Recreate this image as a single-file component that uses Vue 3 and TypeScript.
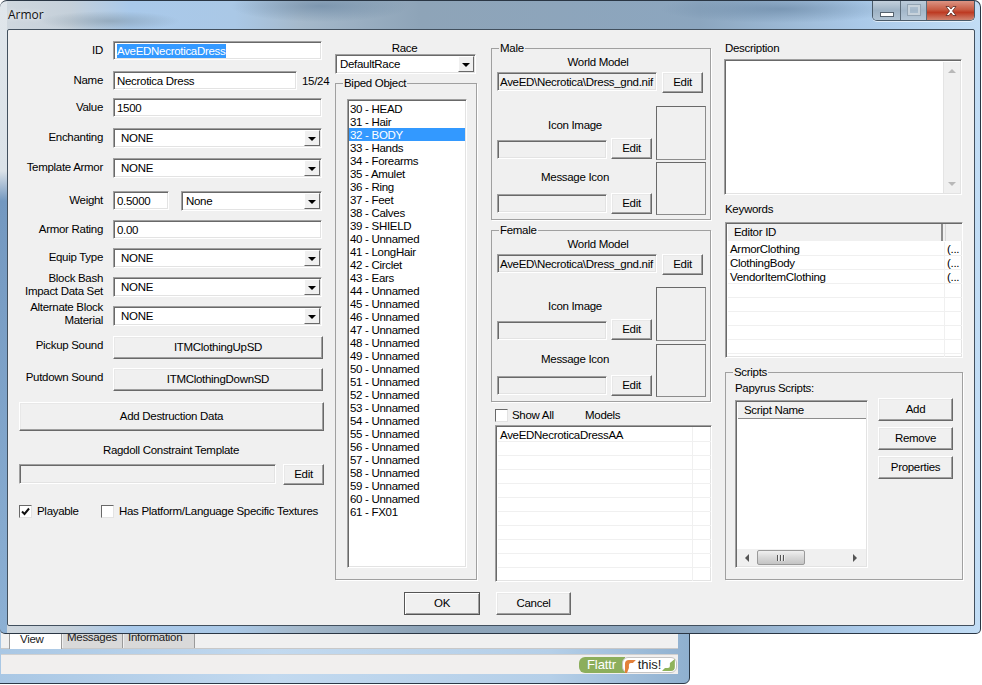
<script setup lang="ts">
const bodyParts: Record<number, string> = {
  30: 'HEAD', 31: 'Hair', 32: 'BODY', 33: 'Hands', 34: 'Forearms', 35: 'Amulet', 36: 'Ring',
  37: 'Feet', 38: 'Calves', 39: 'SHIELD', 41: 'LongHair', 42: 'Circlet', 43: 'Ears', 61: 'FX01',
};
const biped = Array.from({ length: 32 }, (_, i) => `${30 + i} - ${bodyParts[30 + i] ?? 'Unnamed'}`);

const groups = [
  { title: 'Male', cls: 'group--male' },
  { title: 'Female', cls: 'group--female' },
];
const keywords = ['ArmorClothing', 'ClothingBody', 'VendorItemClothing', '', '', '', '', '', ''];
const models = ['AveEDNecroticaDressAA', '', '', '', '', '', '', '', '', '', ''];
</script>

<template>
  <div class="stage">
    <!-- parent window peeking out from below the dialog -->
    <div class="parent">
      <div class="parent-panel">
        <div class="tabs">
          <span class="tab tab--on">View</span>
          <span class="tab">Messages</span>
          <span class="tab tab--wide">Information</span>
        </div>
      </div>
      <div class="statusbar">
        <div class="flattr">
          <span class="flattr-l">Flattr</span>
          <span class="flattr-r">
            <svg width="14" height="15" viewBox="0 0 14 15"><path d="M2 15V6Q2 2 6 2h7L10 5H8Q6 5 6 7v3L4 15Z" fill="#e2803a" /></svg>
            <span>this!</span>
            <svg width="13" height="13" viewBox="0 0 13 13"><path d="M13 0V8Q13 12 9 12H0L3 9H6Q8 9 8 7V4Z" fill="#8fb35a" /></svg>
          </span>
        </div>
      </div>
    </div>

    <!-- dialog -->
    <div class="win">
      <div class="titlebar">
        <span class="title">Armor</span>
        <div class="caption">
          <span class="cap cap--min"><i></i></span>
          <span class="cap cap--max"><i></i></span>
          <span class="cap cap--close">
            <svg width="16" height="12" viewBox="0 0 16 12"><path d="M3 1.500h3L8 4l2-2.500h3L9.500 6 13 10.500h-3L8 8l-2 2.500H3L6.500 6Z" fill="#fff" stroke="#5a2a22" stroke-width=".8" /></svg>
          </span>
        </div>
      </div>

      <div class="client">
        <div class="columns">
          <!-- left: record fields -->
          <section class="col-left">
            <div class="form">
              <label>ID</label>
              <div class="edit sel-wrap"><span class="selected">AveEDNecroticaDress</span></div>

              <label>Name</label>
              <div class="name-row">
                <div class="edit">Necrotica Dress</div>
                <span class="count">15/24</span>
              </div>

              <label>Value</label>
              <div class="edit">1500</div>

              <label>Enchanting</label>
              <div class="combo">NONE<b class="arrow"></b></div>

              <label>Template Armor</label>
              <div class="combo">NONE<b class="arrow"></b></div>

              <label>Weight</label>
              <div class="weight-row">
                <div class="edit">0.5000</div>
                <div class="combo combo--tight">None<b class="arrow"></b></div>
              </div>

              <label>Armor Rating</label>
              <div class="edit">0.00</div>

              <label>Equip Type</label>
              <div class="combo">NONE<b class="arrow"></b></div>

              <label class="two-line">Block Bash<br />Impact Data Set</label>
              <div class="combo">NONE<b class="arrow"></b></div>

              <label class="two-line">Alternate Block<br />Material</label>
              <div class="combo">NONE<b class="arrow"></b></div>

              <label class="btn-label">Pickup Sound</label>
              <button class="btn btn--sound">ITMClothingUpSD</button>

              <label class="btn-label">Putdown Sound</label>
              <button class="btn btn--sound">ITMClothingDownSD</button>
            </div>

            <button class="btn btn--destruct">Add Destruction Data</button>
            <div class="ragdoll-label">Ragdoll Constraint Template</div>
            <div class="ragdoll-row">
              <div class="edit edit--off"></div>
              <button class="btn btn--edit">Edit</button>
            </div>
            <div class="checks">
              <span class="check-item">
                <span class="check">
                  <svg width="11" height="11" viewBox="0 0 11 11"><path d="M2 5.500 4.500 8 9 2.500" fill="none" stroke="#111" stroke-width="2" /></svg>
                </span>
                Playable
              </span>
              <span class="check-item">
                <span class="check"></span>
                Has Platform/Language Specific Textures
              </span>
            </div>
          </section>

          <!-- middle: race and biped slots -->
          <section class="col-mid">
            <div class="centered">Race</div>
            <div class="combo combo--tight race">DefaultRace<b class="arrow"></b></div>
            <fieldset class="group biped">
              <legend>Biped Object</legend>
              <ul class="biped-list">
                <li v-for="row in biped" :key="row" :class="{ on: row.startsWith('32') }">{{ row }}</li>
              </ul>
            </fieldset>
          </section>

          <!-- models -->
          <section class="col-models">
            <fieldset v-for="g in groups" :key="g.title" class="group model-group" :class="g.cls">
              <legend>{{ g.title }}</legend>
              <div class="world-label">World Model</div>
              <div class="world-row">
                <div class="edit edit--off edit--text">AveED\Necrotica\Dress_gnd.nif</div>
                <button class="btn btn--edit">Edit</button>
              </div>
              <div class="slots">
                <div class="slot">
                  <div class="slot-left">
                    <div class="slot-label">Icon Image</div>
                    <div class="slot-row">
                      <div class="edit edit--off"></div>
                      <button class="btn btn--edit">Edit</button>
                    </div>
                  </div>
                  <div class="preview"></div>
                </div>
                <div class="slot slot--msg">
                  <div class="slot-left">
                    <div class="slot-label">Message Icon</div>
                    <div class="slot-row">
                      <div class="edit edit--off"></div>
                      <button class="btn btn--edit">Edit</button>
                    </div>
                  </div>
                  <div class="preview"></div>
                </div>
              </div>
            </fieldset>

            <div class="showall">
              <span class="check"></span>
              <span class="showall-text">Show All</span>
              <span class="models-title">Models</span>
            </div>
            <div class="sunken grid-list models">
              <div v-for="(m, i) in models" :key="i" class="grid-row">
                <span class="cell-a">{{ m }}</span><span class="cell-b"></span>
              </div>
            </div>
          </section>

          <!-- right: description, keywords, scripts -->
          <section class="col-right">
            <div class="plain-label">Description</div>
            <div class="sunken desc">
              <div class="vscroll">
                <b class="tri tri--up"></b>
                <b class="tri tri--down"></b>
              </div>
            </div>
            <div class="plain-label kw-label">Keywords</div>
            <div class="sunken grid-list keywords">
              <div class="kw-head">
                <span class="kw-title">Editor ID</span>
                <span class="kw-rest"></span>
              </div>
              <div v-for="(k, i) in keywords" :key="i" class="grid-row">
                <span class="cell-a">{{ k }}</span>
                <span class="cell-b">{{ k ? '(...' : '' }}</span>
              </div>
            </div>
            <fieldset class="group scripts">
              <legend>Scripts</legend>
              <div class="papyrus">Papyrus Scripts:</div>
              <div class="scripts-row">
                <div class="sunken script-list">
                  <div class="script-head">Script Name</div>
                  <div class="script-body"></div>
                  <div class="hscroll">
                    <b class="tri tri--left"></b>
                    <span class="thumb"><i></i><i></i><i></i></span>
                    <b class="tri tri--right"></b>
                  </div>
                </div>
                <div class="script-btns">
                  <button class="btn">Add</button>
                  <button class="btn">Remove</button>
                  <button class="btn">Properties</button>
                </div>
              </div>
            </fieldset>
          </section>
        </div>

        <div class="footer">
          <button class="btn btn--default">OK</button>
          <button class="btn btn--cancel">Cancel</button>
        </div>
      </div>
    </div>
  </div>
</template>

<style scoped>
.stage {
  position: relative;
  width: 982px;
  height: 685px;
  overflow: hidden;
  background: #fff;
  font: 11.5px/14px "Liberation Sans", Arial, sans-serif;
  letter-spacing: -0.3px;
  color: #000;
}

/* ---- parent window ---- */
.parent {
  position: absolute;
  left: -4px;
  top: 600px;
  width: 694px;
  height: 84px;
  box-sizing: border-box;
  padding: 0 11px 11px 4px;
  display: flex;
  flex-direction: column;
  border: 1px solid #2c3a48;
  border-radius: 0 0 6px 0;
  background: linear-gradient(90deg, #a9c7e4, #c2d9ef 40%, #b5cfe8 80%, #8fb0cf);
}
.parent-panel {
  height: 54px;
  box-sizing: border-box;
  padding: 26px 0 0 8px;
  background: #f0f0f0;
  border-bottom: 1px solid #c8c8c8;
}
.tabs { display: flex; gap: 1px; height: 21px; }
.tab {
  width: 60px;
  box-sizing: border-box;
  padding: 3px 0 0 4px;
  background: #d9d9d9;
  border-right: 1px solid #9a9a9a;
  color: #222;
}
.tab--on { width: 53px; padding: 5px 0 0 10px; background: #fff; border-left: 1px solid #9a9a9a; height: 22px; }
.tab--wide { width: 71px; }
.statusbar {
  flex: 1;
  margin-top: 5px;
  display: flex;
  justify-content: flex-end;
  padding: 2px 1px 1px 0;
  background: #f1efee;
  border-top: 1px solid #d0d0d0;
}
.flattr { display: flex; height: 16px; font-size: 13px; line-height: 16px; letter-spacing: -0.1px; }
.flattr-l {
  width: 46px;
  padding-left: 8px;
  box-sizing: border-box;
  color: #fff;
  background: #8cae5c;
  border-radius: 6px 0 0 6px;
}
.flattr-r {
  flex: 1;
  width: 55px;
  display: flex;
  align-items: center;
  gap: 1px;
  padding-right: 1px;
  box-sizing: border-box;
  background: #fff;
  border: 1px solid #c4c4c4;
  border-radius: 6px;
  margin-left: -3px;
  color: #222;
}
.flattr-r span { flex: 1; }

/* ---- dialog frame ---- */
.win {
  position: absolute;
  left: 0;
  top: 0;
  width: 981px;
  height: 634px;
  box-sizing: border-box;
  padding: 0 5px 7px 7px;
  display: flex;
  flex-direction: column;
  border: 1px solid #2a3644;
  border-left: 0;
  border-radius: 7px 7px 5px 5px;
  background:
    radial-gradient(90px 16px at 320px 5px, rgba(95, 125, 155, .55), transparent),
    radial-gradient(120px 14px at 780px 8px, rgba(95, 125, 155, .55), transparent),
    radial-gradient(70px 10px at 110px 20px, rgba(120, 140, 155, .5), transparent),
    linear-gradient(#e0e6eb 0, #dbe2e8 170px, #7398c0 200px, #8cb0d4 100%) left / 7px 100% no-repeat,
    linear-gradient(90deg, #d0d8df 0, #c5d0da 70px, #a9c9ea 130px, #aac8e6 235px, #a5b9cb 300px, #8ea4b8 420px, #8ca6bf 700px, #aac9e8 860px, #c2ddf5 100%);
}
.titlebar {
  height: 28px;
  display: flex;
  justify-content: space-between;
  flex: none;
}
.title {
  margin: 7px 0 0 1px;
  font: 12px/14px "Open Sans", "Liberation Sans", sans-serif;
  letter-spacing: 0;
  color: #111;
  text-shadow: 0 0 5px #fff;
}
.caption {
  display: flex;
  height: 20px;
  box-sizing: border-box;
  border: 1px solid #4a5a68;
  border-top: 0;
  border-radius: 0 0 5px 5px;
  overflow: hidden;
  box-shadow: 0 1px 0 rgba(255, 255, 255, .6);
}
.cap { display: flex; align-items: center; justify-content: center; box-sizing: border-box; }
.cap--min {
  width: 28px;
  background: linear-gradient(#c3d0dc, #9eb2c4 50%, #b2c4d4);
  border-right: 1px solid #5c6c7a;
}
.cap--min i { width: 12px; height: 3px; margin-top: 7px; background: #fff; border: 1px solid #55626e; }
.cap--max {
  width: 26px;
  background: linear-gradient(#bccbd9, #a3b7c9 50%, #b6c8d8);
  border-right: 1px solid #5c6c7a;
}
.cap--max i { width: 8px; height: 6px; border: 2px solid #c7d2db; outline: 1px solid #93a4b3; margin-top: -2px; }
.cap--close { width: 47px; background: linear-gradient(#dc9484, #c85c44 45%, #bd3a22 60%, #d08470); }

.client {
  flex: 1;
  min-height: 0;
  box-sizing: border-box;
  border: 1px solid #42505e;
  border-radius: 2px;
  background: #f0f0f0;
}
.columns { display: flex; height: 550px; box-sizing: border-box; padding-top: 11px; }

/* ---- shared controls ---- */
.edit {
  height: 19px;
  box-sizing: border-box;
  padding: 2px 0 0 3px;
  background: #fff;
  border: 1px solid;
  border-color: #a0a0a0 #fff #fff #a0a0a0;
  box-shadow: inset 1px 1px #696969, inset -1px -1px #e3e3e3;
  white-space: nowrap;
  overflow: hidden;
}
.edit--off { background: #f0f0f0; }
.edit--text { padding-left: 2px; }
.combo {
  position: relative;
  height: 20px;
  box-sizing: border-box;
  padding: 2px 0 0 7px;
  background: #fff;
  border: 1px solid;
  border-color: #a0a0a0 #fff #fff #a0a0a0;
  box-shadow: inset 1px 1px #696969, inset -1px -1px #e3e3e3;
}
.combo--tight { padding-left: 4px; }
.arrow {
  position: absolute;
  right: 1px;
  top: 1px;
  width: 16px;
  height: 16px;
  box-sizing: border-box;
  background: #f0f0f0;
  border: 1px solid;
  border-color: #fff #696969 #696969 #fff;
}
.arrow::after {
  content: "";
  position: absolute;
  left: 3px;
  top: 6px;
  border: 4px solid transparent;
  border-top: 4px solid #000;
  border-bottom: 0;
}
.btn {
  display: block;
  height: 23px;
  padding: 0 0 2px;
  box-sizing: border-box;
  font: inherit;
  letter-spacing: inherit;
  color: #000;
  background: #f0f0f0;
  border: 1px solid;
  border-color: #fff #696969 #696969 #fff;
  box-shadow: inset -1px -1px #a0a0a0, inset 1px 1px #e8e8e8;
}
.btn--edit { width: 41px; height: 21px; flex: none; }
.group {
  margin: 0;
  padding: 0;
  min-width: 0;
  box-sizing: border-box;
  border: 1px solid #a0a0a0;
  box-shadow: 1px 1px 0 #fff;
}
.group legend { padding: 0 1px; line-height: 14px; }
.sunken {
  box-sizing: border-box;
  background: #fff;
  border: 1px solid;
  border-color: #a0a0a0 #fff #fff #a0a0a0;
  box-shadow: inset 1px 1px #696969, inset -1px -1px #e3e3e3;
}
.check {
  width: 13px;
  height: 13px;
  flex: none;
  box-sizing: border-box;
  background: #fff;
  border: 1px solid;
  border-color: #696969 #e3e3e3 #e3e3e3 #696969;
  display: flex;
  align-items: center;
  justify-content: center;
}

/* ---- left column ---- */
.col-left { width: 311px; margin-left: 11px; flex: none; }
.form {
  display: grid;
  width: 304px;
  grid-template-columns: 84px 209px;
  column-gap: 10px;
  grid-template-rows: 30px 27px 30px 30px 33px 29px 28px 29px 29px 30px 32px 34px;
  align-items: start;
}
.form label { text-align: right; padding-top: 2px; white-space: nowrap; }
.form label.two-line { padding-top: 0; margin-top: -5px; line-height: 13px; }
.form label.btn-label { padding-top: 0; margin-top: 2px; }
.form .edit { width: 209px; }
.form .combo { width: 209px; }
.name-row { display: flex; align-items: center; }
.name-row .edit { width: 184px !important; flex: none; }
.count { margin-left: 5px; }
.weight-row { display: flex; gap: 12px; }
.weight-row .edit { width: 56px !important; flex: none; }
.weight-row .combo { width: 141px !important; flex: none; }
.selected { display: inline-block; height: 14px; background: #3399ff; color: #fff; }
.btn--sound { width: 210px; }
.btn--destruct { width: 305px; height: 29px; }
.ragdoll-label { width: 305px; margin-top: 12px; text-align: center; padding-right: 1px; box-sizing: border-box; }
.ragdoll-row { display: flex; justify-content: space-between; width: 305px; margin-top: 7px; }
.ragdoll-row .edit { width: 257px; height: 20px; }
.checks { display: flex; gap: 24px; margin-top: 19px; }
.check-item { display: flex; align-items: center; gap: 5px; white-space: nowrap; }
.check-item:first-child { width: 58px; }

/* ---- race / biped ---- */
.col-mid { width: 142px; margin-left: 5px; flex: none; }
.centered { text-align: center; padding-right: 3px; }
.race { width: 141px; margin-top: -1px; }
.biped { height: 504px; margin-top: 2px; padding-left: 11px; }
.biped legend { margin-left: -4px; }
.biped-list {
  list-style: none;
  width: 120px;
  height: 469px;
  margin: 9px 0 0;
  padding: 2px 1px;
  box-sizing: border-box;
  background: #fff;
  border: 1px solid;
  border-color: #a0a0a0 #fff #fff #a0a0a0;
  box-shadow: inset 1px 1px #696969, inset -1px -1px #e3e3e3;
}
.biped-list li { height: 13px; line-height: 15px; padding-left: 1px; white-space: nowrap; }
.biped-list li.on { background: #3399ff; color: #fff; }

/* ---- models ---- */
.col-models { width: 220px; margin-left: 14px; flex: none; }
.model-group { height: 179px; padding-left: 5px; }
.model-group legend { margin-left: 2px; }
.group--female { margin-top: 3px; }
.world-label { text-align: center; padding-right: 11px; }
.world-row { display: flex; gap: 5px; margin-top: 3px; }
.world-row .edit { width: 160px; }
.slots { display: grid; row-gap: 2px; margin-top: 13px; }
.slot { display: flex; gap: 4px; height: 54px; }
.slot--msg { height: 53px; }
.slot-left {
  width: 155px;
  display: flex;
  flex-direction: column;
  justify-content: flex-end;
  padding-bottom: 1px;
  box-sizing: border-box;
}
.slot-label { text-align: center; margin-bottom: 6px; padding-left: 1px; }
.slot--msg .slot-label { margin-bottom: 9px; }
.slot-row { display: flex; gap: 4px; }
.slot-row .edit { width: 110px; margin-top: 2px; }
.slot--msg .slot-row .edit { margin-top: 1px; }
.preview { width: 50px; border: 1px solid #696969; border-right-color: #8c8c8c; border-bottom-color: #8c8c8c; box-sizing: border-box; }
.group--female .slots { margin-top: 12px; row-gap: 3px; }
.showall { display: flex; align-items: center; height: 16px; margin-top: 5px; padding-left: 4px; }
.showall-text { margin-left: 4px; width: 73px; }
.grid-list { overflow: hidden; }
.models { width: 217px; height: 157px; margin-top: 2px; margin-left: 4px; padding: 1px 0 0 2px; }
.grid-row { display: flex; height: 14px; box-sizing: border-box; border-bottom: 1px solid #f0f0f0; }
.cell-a { padding: 1px 0 0 2px; line-height: 12px; white-space: nowrap; overflow: hidden; box-sizing: border-box; }
.cell-b { padding-top: 1px; line-height: 12px; }
.models .cell-a { width: 195px; border-right: 1px solid #f0f0f0; }
.models .grid-row:first-child { height: 15px; }
.models .grid-row:first-child .cell-a { padding-top: 2px; }

/* ---- right column ---- */
.col-right { width: 238px; margin-left: 14px; flex: none; }
.desc { height: 136px; width: 238px; margin-top: 4px; margin-left: -1px; display: flex; justify-content: flex-end; padding: 2px 1px 1px; }
.vscroll {
  width: 17px;
  display: flex;
  flex-direction: column;
  justify-content: space-between;
  align-items: center;
  padding: 7px 0;
  box-sizing: border-box;
  background: #f0f0f0;
  border-left: 1px solid #e4e4e4;
}
.tri { display: block; width: 0; height: 0; border: 4px solid transparent; }
.tri--up { border-top: 0; border-bottom: 4px solid #b8b8b8; }
.tri--down { border-bottom: 0; border-top: 4px solid #b8b8b8; }
.tri--left { border-left: 0; border-right: 4px solid #555; }
.tri--right { border-right: 0; border-left: 4px solid #555; }
.kw-label { margin-top: 7px; }
.keywords { width: 238px; height: 136px; margin-top: 6px; padding: 0 0 0 2px; }
.kw-head { display: flex; height: 18px; box-sizing: border-box; border-top: 1px solid #696969; background: #f0f0f0; margin-bottom: 1px; }
.kw-title { width: 207px; padding: 1px 0 0 6px; box-sizing: content-box; border-right: 2px solid #8c8c8c; }
.kw-rest { flex: 1; margin-left: 2px; border-left: 1px solid #d8d8d8; }
.keywords .cell-a { width: 217px; border-right: 1px solid #f0f0f0; }
.keywords .cell-b { padding-left: 2px; white-space: nowrap; }
.scripts { height: 215px; margin-top: 7px; padding-left: 9px; }
.scripts legend { margin-left: -2px; }
.papyrus { margin-top: 2px; }
.scripts-row { display: flex; gap: 10px; margin-top: 5px; }
.script-list { width: 133px; height: 168px; display: flex; flex-direction: column; padding: 1px; }
.script-head {
  height: 17px;
  flex: none;
  box-sizing: border-box;
  padding: 1px 0 0 6px;
  background: #f0f0f0;
  border-bottom: 1px solid #8c8c8c;
  margin-left: 1px;
}
.script-body { flex: 1; }
.hscroll {
  height: 17px;
  flex: none;
  display: flex;
  align-items: center;
  padding: 0 9px 0 8px;
  background: #f0f0f0;
}
.thumb {
  width: 48px;
  height: 15px;
  margin: 0 auto 0 8px;
  box-sizing: border-box;
  display: flex;
  align-items: center;
  justify-content: center;
  gap: 1px;
  background: linear-gradient(#f0f0f0, #d8d8d8 50%, #c4c4c4);
  border: 1px solid #9a9a9a;
  border-radius: 2px;
}
.thumb i { width: 1px; height: 6px; background: #555; box-shadow: 1px 0 #eee; margin-right: 1px; }
.script-btns { display: flex; flex-direction: column; gap: 6px; margin-top: -2px; }
.script-btns .btn { width: 75px; height: 23px; }

/* ---- footer ---- */
.footer { display: flex; gap: 16px; margin-top: 12px; padding-left: 396px; }
.btn--default {
  width: 76px;
  border: 1px solid #555;
  box-shadow: inset 1px 1px #fff, inset -1px -1px #a0a0a0;
}
.btn--cancel { width: 75px; }
</style>

<style>
html, body { margin: 0; background: #fff; }
</style>
